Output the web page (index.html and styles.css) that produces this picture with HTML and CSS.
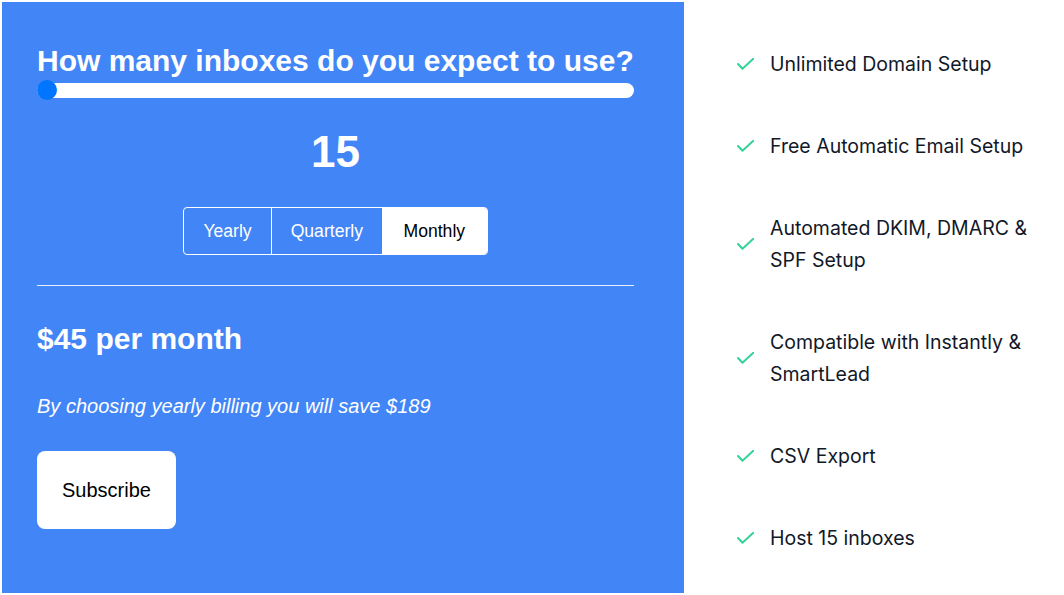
FILE: index.html
```html
<!DOCTYPE html>
<html lang="en">
<head>
<meta charset="utf-8">
<title>Pricing</title>
<link rel="stylesheet" href="styles.css">
</head>
<body>
<div class="page">
  <section class="calc">
    <h1 class="calc-title">How many inboxes do you expect to use?</h1>
    <div class="slider">
      <div class="slider-track"></div>
      <div class="slider-thumb"></div>
    </div>
    <div class="count">15</div>
    <div class="toggle-wrap">
      <div class="toggle">
        <button class="toggle-btn">Yearly</button>
        <button class="toggle-btn">Quarterly</button>
        <button class="toggle-btn active">Monthly</button>
      </div>
    </div>
    <hr class="divider">
    <h2 class="price">$45 per month</h2>
    <p class="save">By choosing yearly billing you will save $189</p>
    <button class="subscribe">Subscribe</button>
  </section>
  <ul class="features">
    <li class="feature"><svg class="check" viewBox="0 0 17 12" width="17" height="12"><polyline points="1,6 5.5,10.8 16.3,0.8"/></svg><span>Unlimited Domain Setup</span></li>
    <li class="feature"><svg class="check" viewBox="0 0 17 12" width="17" height="12"><polyline points="1,6 5.5,10.8 16.3,0.8"/></svg><span>Free Automatic Email Setup</span></li>
    <li class="feature"><svg class="check" viewBox="0 0 17 12" width="17" height="12"><polyline points="1,6 5.5,10.8 16.3,0.8"/></svg><span>Automated DKIM, DMARC &amp;<br>SPF Setup</span></li>
    <li class="feature"><svg class="check" viewBox="0 0 17 12" width="17" height="12"><polyline points="1,6 5.5,10.8 16.3,0.8"/></svg><span>Compatible with Instantly &amp;<br>SmartLead</span></li>
    <li class="feature"><svg class="check" viewBox="0 0 17 12" width="17" height="12"><polyline points="1,6 5.5,10.8 16.3,0.8"/></svg><span>CSV Export</span></li>
    <li class="feature"><svg class="check" viewBox="0 0 17 12" width="17" height="12"><polyline points="1,6 5.5,10.8 16.3,0.8"/></svg><span>Host 15 inboxes</span></li>
  </ul>
</div>
</body>
</html>
```
FILE: styles.css
```css
html, body {
  margin: 0;
  padding: 0;
  background: #ffffff;
}
body {
  padding: 2px;
  font-family: "Liberation Sans", Arial, sans-serif;
}
.page {
  display: flex;
  align-items: flex-start;
}
.calc {
  width: 682px;
  height: 591px;
  box-sizing: border-box;
  padding: 42px 50px 0 35px;
  background: #4285f6;
  color: #ffffff;
  flex-shrink: 0;
}
.calc-title {
  margin: 0;
  font-size: 30px;
  line-height: 34px;
  font-weight: 700;
}
.slider {
  position: relative;
  height: 20px;
  margin-top: 2px;
  display: flex;
  align-items: center;
}
.slider-track {
  flex: 1;
  height: 15px;
  background: #ffffff;
  border-radius: 8px;
}
.slider-thumb {
  position: absolute;
  left: 0;
  top: 0;
  width: 20px;
  height: 20px;
  border-radius: 50%;
  background: #0075ff;
}
.count {
  margin-top: 27px;
  text-align: center;
  font-size: 44px;
  line-height: 50px;
  font-weight: 700;
}
.toggle-wrap {
  margin-top: 30px;
  display: flex;
  justify-content: center;
}
.toggle {
  display: flex;
  border: 1px solid #ffffff;
  border-radius: 4px;
  overflow: hidden;
}
.toggle-btn {
  font-family: "Liberation Sans", Arial, sans-serif;
  font-size: 17.6px;
  line-height: 20px;
  padding: 13px 19px;
  margin: 0;
  border: 0;
  border-left: 1px solid #ffffff;
  background: transparent;
  color: #ffffff;
}
.toggle-btn:first-child {
  border-left: 0;
}
.toggle-btn.active {
  background: #ffffff;
  color: #000000;
  padding: 13px 21.5px 13px 20.5px;
}
.divider {
  margin: 30px 0 0 0;
  border: 0;
  height: 1px;
  background: #e8eefb;
}
.price {
  margin: 36px 0 0 0;
  font-size: 30px;
  line-height: 34px;
  font-weight: 700;
}
.save {
  margin: 38px 0 0 0;
  font-size: 20px;
  line-height: 24px;
  font-style: italic;
}
.subscribe {
  margin-top: 33px;
  font-family: "Liberation Sans", Arial, sans-serif;
  font-size: 20px;
  line-height: 24px;
  padding: 27px 25px;
  border: 0;
  border-radius: 8px;
  background: #ffffff;
  color: #000000;
}
.features {
  list-style: none;
  margin: 0;
  padding: 46px 0 0 53px;
  display: flex;
  flex-direction: column;
  gap: 50px;
  font-family: Inter, "Noto Sans", sans-serif;
  font-size: 19.5px;
  line-height: 32px;
  color: #111827;
}
.feature {
  display: flex;
  align-items: center;
  gap: 16px;
}
.check {
  flex-shrink: 0;
  fill: none;
  stroke: #34d399;
  stroke-width: 2;
  stroke-linecap: round;
  stroke-linejoin: round;
}
```
